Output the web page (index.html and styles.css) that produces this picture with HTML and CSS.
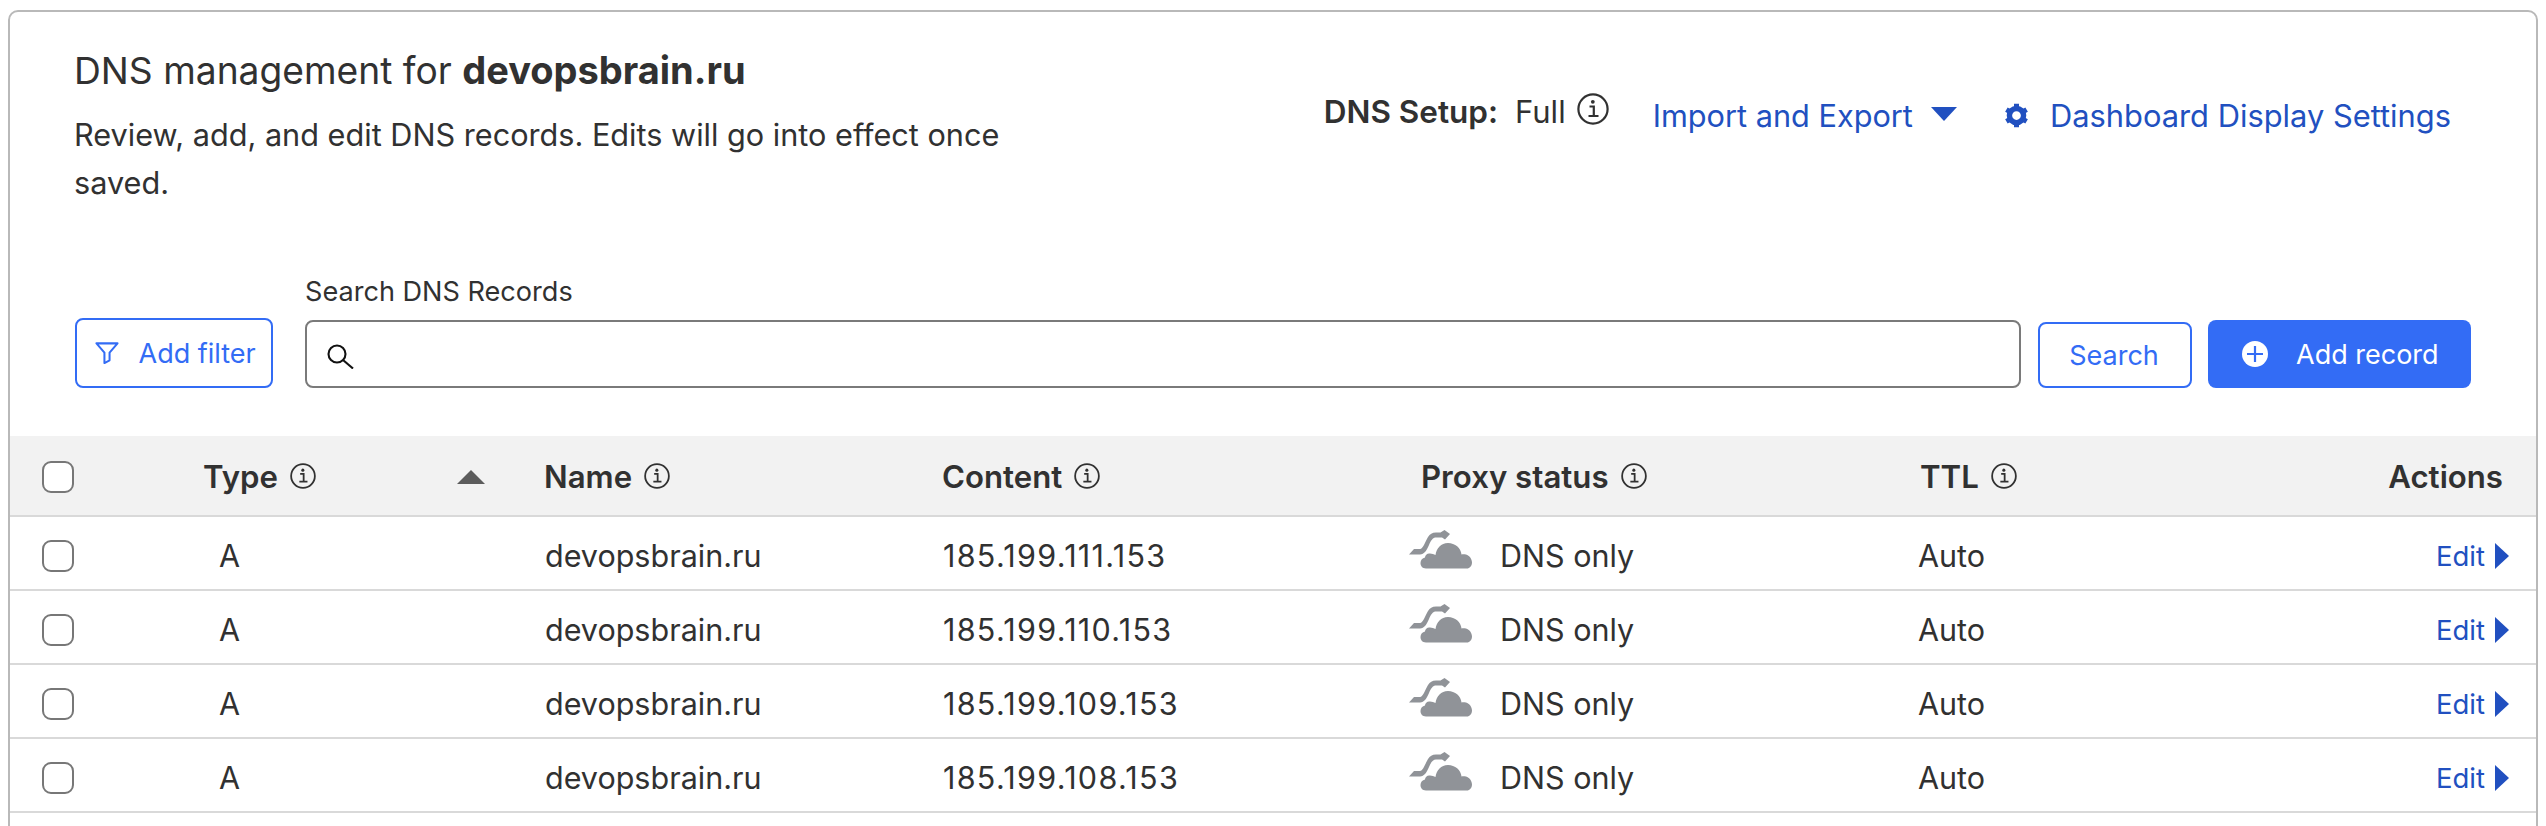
FILE: index.html
```html
<!DOCTYPE html>
<html lang="en">
<head>
<meta charset="utf-8">
<title>DNS management</title>
<link rel="stylesheet" href="styles.css">
</head>
<body>
<svg class="sprite" aria-hidden="true">
  <symbol id="info" viewBox="0 0 32 32">
    <circle cx="16" cy="16" r="14.6" fill="none" stroke="currentColor" stroke-width="2.2"/>
    <path d="M12.5 13.5h4.3v9M11.5 23h10" fill="none" stroke="currentColor" stroke-width="2.2"/>
    <circle cx="15.8" cy="8.8" r="1.9" fill="currentColor"/>
  </symbol>
  <symbol id="cloud" viewBox="0 0 63 39">
    <path fill="#909398" d="M0 24.500 L5 19 H11 C14 19 16 12 19 7 C21 4 23 2.500 27 2.500 H31.500 L35.500 0 L41 4 L36 9.500 L33 7.500 H27 C24 7.500 22 10 20 15 C18 20 15 24.500 11 24.500 Z"/>
    <path fill="#909398" d="M17 38.500 C13 38.500 11.500 35.500 11.500 33 C11.500 30 13.500 28 16 27.500 C16 25 18.500 23 21 23.500 C23 23.800 25 24 26.500 25 C27.500 18 32 13 39 13 C46 13 52 18 52.500 24.500 C53.500 24 55 24 57 24.500 C60.500 25.500 63 29 63 32.500 C63 36 60.500 38.500 58 38.500 Z"/>
  </symbol>
</svg>
<main class="card">
  <header class="top">
    <div class="intro">
      <h1 class="title">DNS management for <strong>devopsbrain.ru</strong></h1>
      <p class="desc">Review, add, and edit DNS records. Edits will go into effect once saved.</p>
    </div>
    <div class="tools">
      <div class="setup"><b>DNS Setup:</b><span class="setup-val">Full</span><svg class="info-lg"><use href="#info"/></svg></div>
      <a class="link import">Import and Export<span class="caret"></span></a>
      <a class="link dash">
        <svg class="gear" viewBox="0 0 24 24"><circle cx="12" cy="12" r="6.800" fill="none" stroke="currentColor" stroke-width="5.200"/><path d="M12 .8v4.400M12 18.800v4.400M2.300 6.400l3.800 2.200M17.900 15.400l3.800 2.200M2.300 17.600l3.800-2.200M17.900 8.600l3.800-2.200" stroke="currentColor" stroke-width="4.800"/></svg>
        Dashboard Display Settings</a>
    </div>
  </header>

  <section class="search">
    <button class="btn filter">
      <svg class="funnel" viewBox="0 0 26 24"><path d="M1.500 1.500h23l-8.700 10v8.500l-5.600 3v-11.500z" fill="none" stroke="currentColor" stroke-width="2.200" stroke-linejoin="round"/></svg>
      Add filter</button>
    <div class="field">
      <label class="field-label">Search DNS Records</label>
      <div class="input">
        <svg class="glass" viewBox="0 0 27 25"><circle cx="10" cy="10" r="8.500" fill="none" stroke="#111" stroke-width="2.100"/><path d="M16 16l10 8.500" stroke="#111" stroke-width="2.100"/></svg>
      </div>
    </div>
    <button class="btn submit">Search</button>
    <button class="btn add">
      <svg class="plus" viewBox="0 0 26 26"><circle cx="13" cy="13" r="13" fill="#fff"/><path d="M13 5v16M5 13h16" stroke="#336cf5" stroke-width="2.200"/></svg>
      Add record</button>
  </section>

  <section class="table">
    <div class="row head">
      <span class="check"></span>
      <span class="th type-h"><span class="th-lbl">Type<svg class="info"><use href="#info"/></svg></span><span class="sort"></span></span>
      <span class="th name-h">Name<svg class="info"><use href="#info"/></svg></span>
      <span class="th">Content<svg class="info"><use href="#info"/></svg></span>
      <span class="th">Proxy status<svg class="info"><use href="#info"/></svg></span>
      <span class="th">TTL<svg class="info"><use href="#info"/></svg></span>
      <span class="th actions">Actions</span>
    </div>
    <div class="row">
      <span class="check"></span><span class="type">A</span><span>devopsbrain.ru</span><span class="ip">185.199.111.153</span>
      <span class="proxy"><svg class="cloud"><use href="#cloud"/></svg>DNS only</span><span class="ttl">Auto</span>
      <a class="edit">Edit<span class="tri"></span></a>
    </div>
    <div class="row">
      <span class="check"></span><span class="type">A</span><span>devopsbrain.ru</span><span class="ip">185.199.110.153</span>
      <span class="proxy"><svg class="cloud"><use href="#cloud"/></svg>DNS only</span><span class="ttl">Auto</span>
      <a class="edit">Edit<span class="tri"></span></a>
    </div>
    <div class="row">
      <span class="check"></span><span class="type">A</span><span>devopsbrain.ru</span><span class="ip">185.199.109.153</span>
      <span class="proxy"><svg class="cloud"><use href="#cloud"/></svg>DNS only</span><span class="ttl">Auto</span>
      <a class="edit">Edit<span class="tri"></span></a>
    </div>
    <div class="row">
      <span class="check"></span><span class="type">A</span><span>devopsbrain.ru</span><span class="ip">185.199.108.153</span>
      <span class="proxy"><svg class="cloud"><use href="#cloud"/></svg>DNS only</span><span class="ttl">Auto</span>
      <a class="edit">Edit<span class="tri"></span></a>
    </div>
  </section>
</main>
</body>
</html>
```
FILE: styles.css
```css
* { box-sizing: border-box; }
html, body { height: 826px; overflow: hidden; }
body {
  margin: 0;
  padding: 10px 8px 0;
  background: #fff;
  color: #313131;
  font-family: Inter, "Liberation Sans", sans-serif;
  font-size: 30.5px;
}
.sprite { display: none; }
.card {
  border: 2.500px solid #b9b9b9;
  border-radius: 10px;
  min-height: 900px;
  background: #fff;
}
.top {
  display: flex;
  justify-content: space-between;
  padding: 36px 85px 0 64px;
  height: 263px;
}
.intro { width: 945px; }
.title {
  margin: 0;
  font-size: 37.2px;
  font-weight: 400;
  line-height: 44px;
}
.title strong { font-weight: 700; font-size: 38px; }
.desc {
  margin: 18px 0 0;
  line-height: 48px;
  font-size: 30.65px;
}
.tools {
  display: flex;
  align-items: flex-start;
  padding-top: 47px;
}
.setup { display: flex; align-items: center; height: 40px; margin-top: -4px; font-size: 31px; }
.setup b { font-weight: 600; font-size: 31.5px; }
.setup-val { margin-left: 17px; }
.info-lg { width: 32px; height: 32px; margin: -4px 0 0 11px; }
.link { color: #2150c0; display: flex; align-items: center; height: 40px; font-size: 30.7px; }
.import { margin-left: 44px; }
.caret {
  margin-left: 18px;
  border-left: 13px solid transparent;
  border-right: 13px solid transparent;
  border-top: 14px solid #2150c0;
  margin-top: -2px;
}
.dash { margin-left: 47px; font-size: 30.85px; }
.gear { width: 25px; height: 25px; margin-right: 21px; }

.search {
  display: flex;
  align-items: flex-end;
  padding: 0 65px;
  height: 113px;
  margin-bottom: 48px;
}
.btn {
  font: inherit;
  font-size: 27px;
  height: 68px;
  border-radius: 8px;
  border: 2.500px solid #336cf5;
  background: #fff;
  color: #336cf5;
  display: flex;
  align-items: center;
  justify-content: center;
  padding: 0;
}
.filter { width: 198px; height: 70px; margin-right: 32px; justify-content: flex-start; padding-left: 17.500px; }
.funnel { width: 24px; height: 22px; margin-right: 20px; }
.field { flex: 1; }
.field-label { display: block; font-size: 27.1px; line-height: 32px; margin-bottom: 12px; }
.input {
  height: 68px;
  border: 2.500px solid #7a7a7a;
  border-radius: 8px;
  display: flex;
  align-items: center;
  padding-left: 20px;
}
.glass { width: 27px; height: 25px; margin-top: 5px; }
.submit { width: 154px; height: 66px; margin-left: 17px; padding-right: 2px; }
.add { width: 263px; margin-left: 16px; background: #336cf5; color: #fff; border: 0; justify-content: flex-start; padding-left: 34px; }
.plus { width: 26px; height: 26px; margin-right: 28px; }

.row {
  display: grid;
  grid-template-columns: 162px 341px 397px 479px 499px 170px 1fr;
  align-items: center;
  height: 74px;
  padding: 5px 33px 0 32px;
  border-bottom: 2.500px solid #d9d9d9;
}
.head {
  height: 81px;
  padding-top: 2px;
  background: #f2f2f2;
}
.check {
  width: 32px;
  height: 32px;
  border: 2.500px solid #777;
  border-radius: 9px;
  background: #fff;
}
.th { font-weight: 600; font-size: 31.2px; display: flex; align-items: center; }
.type-h { justify-content: space-between; padding-right: 60px; margin-left: -1px; }
.name-h { margin-left: -1px; }
.th-lbl { display: flex; align-items: center; }
.info { width: 26px; height: 26px; margin-left: 12px; margin-top: -2px; }
.sort {
  border-left: 14px solid transparent;
  border-right: 14px solid transparent;
  border-bottom: 14px solid #5c5c5c;
}
.actions { justify-content: flex-end; }
.type { padding-left: 15px; }
.ip { letter-spacing: 1.3px; margin-left: 1px; }
.proxy { display: flex; align-items: center; margin-left: -12px; }
.cloud { width: 63px; height: 39px; margin-right: 28px; margin-top: -12px; }
.ttl { margin-left: -2px; }
.edit {
  color: #2150c0;
  font-size: 27.5px;
  display: flex;
  align-items: center;
  justify-content: flex-end;
  margin: 1px -6px 0 0;
}
.tri {
  margin-left: 10px;
  border-top: 13px solid transparent;
  border-bottom: 13px solid transparent;
  border-left: 14px solid #2150c0;
}
```
